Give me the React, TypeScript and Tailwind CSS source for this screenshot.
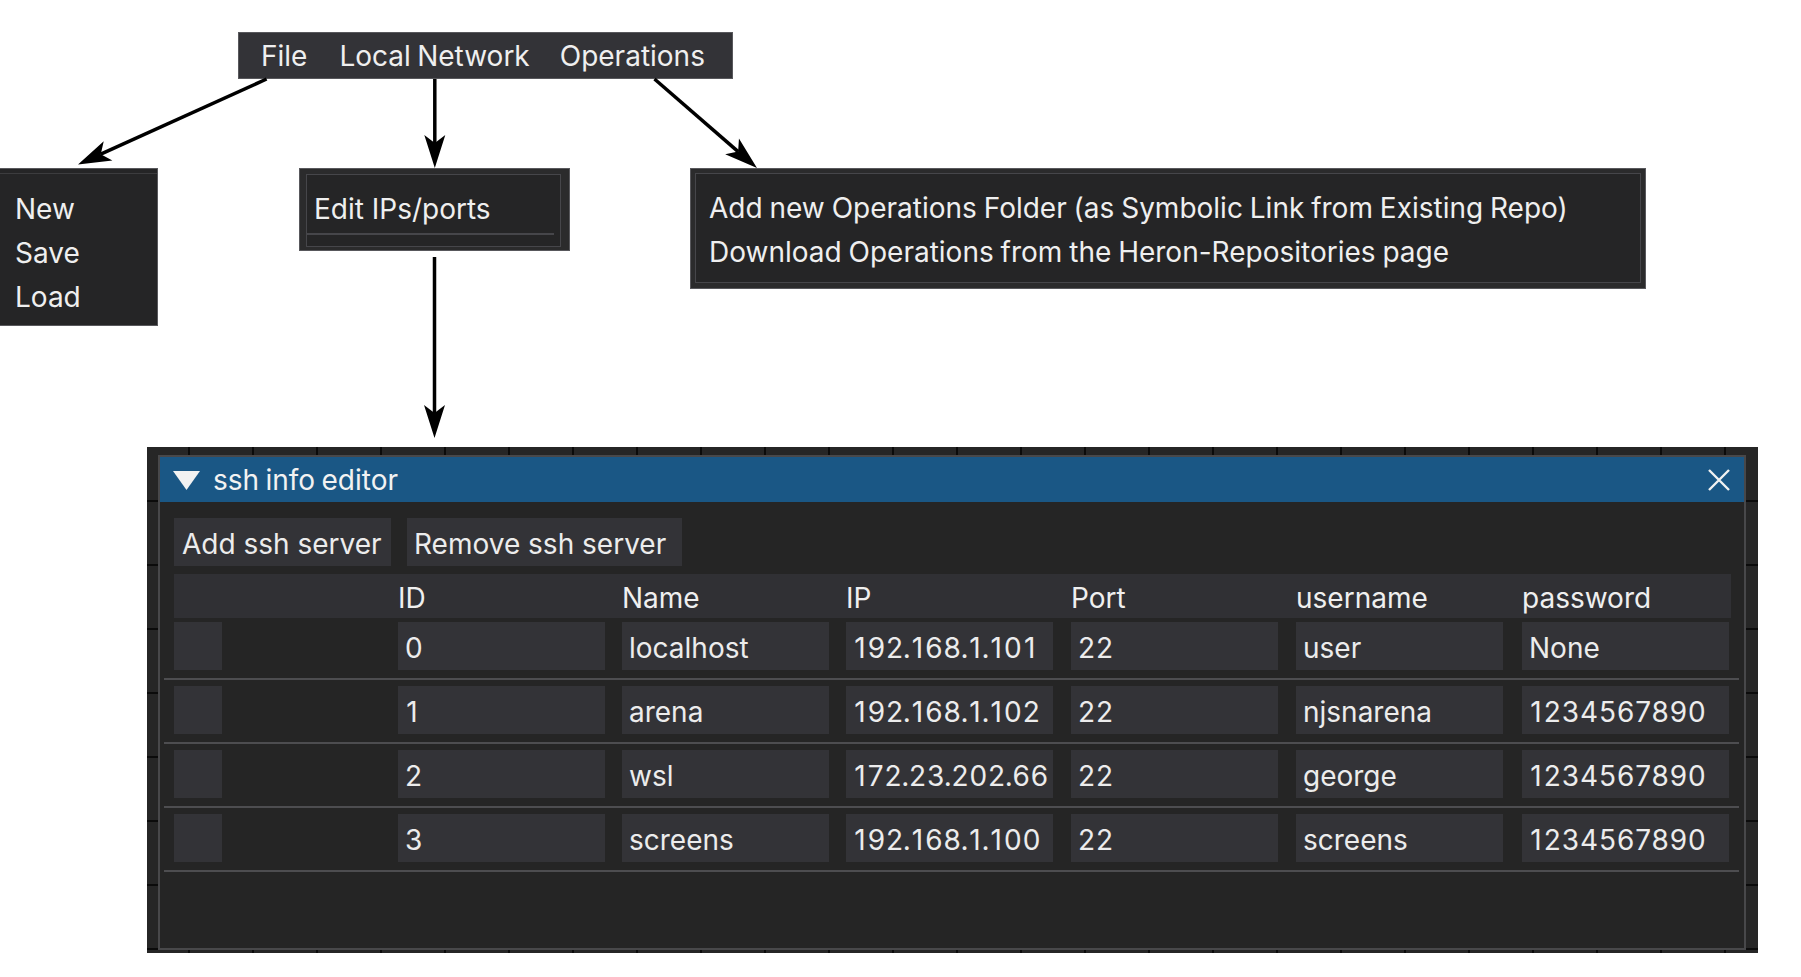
import React from 'react';

type Pt = { x1: number; y1: number; x2: number; y2: number };

const rows = [
  ['0', 'localhost', '192.168.1.101', '22', 'user', 'None'],
  ['1', 'arena', '192.168.1.102', '22', 'njsnarena', '1234567890'],
  ['2', 'wsl', '172.23.202.66', '22', 'george', '1234567890'],
  ['3', 'screens', '192.168.1.100', '22', 'screens', '1234567890'],
];

const headers = ['ID', 'Name', 'IP', 'Port', 'username', 'password'];

// line + notched arrow head, head length 33, half width 10.5
const Arrow = ({ x1, y1, x2, y2 }: Pt) => {
  const len = Math.hypot(x2 - x1, y2 - y1);
  const ux = (x2 - x1) / len;
  const uy = (y2 - y1) / len;
  const px = -uy;
  const py = ux;
  const L = 33;
  const W = 10.5;
  const notch = 8;
  const bx = x2 - ux * L;
  const by = y2 - uy * L;
  const nx = bx + ux * notch;
  const ny = by + uy * notch;
  const pts = [
    `${x2},${y2}`,
    `${bx + px * W},${by + py * W}`,
    `${nx},${ny}`,
    `${bx - px * W},${by - py * W}`,
  ].join(' ');
  return (
    <g>
      <line x1={x1} y1={y1} x2={nx} y2={ny} stroke="#000" strokeWidth={3.5} />
      <polygon points={pts} fill="#000" />
    </g>
  );
};

const MenuBar = () => (
  <div className="absolute left-[238px] top-[32px] w-[495px] h-[47px] bg-[#333337] border border-[#58585c] flex items-center pl-[22px] text-[#efefef] [word-spacing:-1.5px]">
    <span>File</span>
    <span className="ml-[32px]">Local Network</span>
    <span className="ml-[30px]">Operations</span>
  </div>
);

const FileMenu = () => (
  <div className="absolute left-0 top-[168px] w-[158px] h-[158px] bg-[#252526] border border-l-0 border-[#58585c] text-[#efefef]">
    <div className="border-t border-[#3c3c3e] mt-[4px] pl-[15px] pt-[13px] flex flex-col leading-[44px]">
      <span>New</span>
      <span>Save</span>
      <span>Load</span>
    </div>
  </div>
);

const EditMenu = () => (
  <div className="absolute left-[299px] top-[168px] w-[271px] h-[83px] bg-[#2b2b2c] border border-[#58585c] pl-[6px] pt-[5px] pr-[8px] pb-[3px] flex">
    <div className="flex-1 bg-[#252526] border border-[#46464a] flex flex-col text-[#efefef]">
      <div className="h-[58px] flex items-center pl-[7px] pt-[9px]">Edit IPs/ports</div>
      <div className="h-[2px] bg-[#46464a] mr-[6px]" />
    </div>
  </div>
);

const OperationsMenu = () => (
  <div className="absolute left-[690px] top-[168px] w-[956px] h-[121px] bg-[#2b2b2c] border border-[#58585c] p-[4px] pt-[4px] pb-[5px] flex">
    <div className="flex-1 bg-[#252526] border border-[#46464a] pl-[13px] pt-[12px] flex flex-col leading-[44px] text-[#efefef] [word-spacing:-1px]">
      <span>Add new Operations Folder (as Symbolic Link from Existing Repo)</span>
      <span>Download Operations from the Heron-Repositories page</span>
    </div>
  </div>
);

// the app font sets "1" wide and "." tight, so nudge those in number cells
const NumText = ({ text }: { text: string }) => (
  <span className="tracking-[0.9px]">
    {text.split('').map((ch, i) =>
      ch === '1' ? (
        <span key={i} className="px-[1.25px]">1</span>
      ) : ch === '.' ? (
        <span key={i} className="mx-[-1.3px]">.</span>
      ) : (
        <span key={i}>{ch}</span>
      ),
    )}
  </span>
);

const Cell = ({ text }: { text: string }) => (
  <div className="w-[207px] h-[48px] bg-[#333337] flex items-center pl-[7px] pt-[3px] text-[#ececec] whitespace-nowrap">
    {/^[\d.]+$/.test(text) ? <NumText text={text} /> : text}
  </div>
);

const SshEditor = () => (
  <div className="absolute left-[147px] top-[447px] w-[1611px] h-[506px] bg-[#262626] [background-image:linear-gradient(to_right,#0b0b0b_2px,transparent_2px),linear-gradient(to_bottom,#0b0b0b_2px,transparent_2px)] [background-size:64px_64px] [background-position:41px_53px] pl-[11px] pt-[8px] pr-[12px] pb-[3px] flex">
    <div className="flex-1 bg-[#252525] border-2 border-[#48484a] flex flex-col">
      <div className="h-[45px] bg-[#1a5785] flex items-center pl-[13px] pr-[14px] text-[#f2f2f2]">
        <svg width="27" height="19" viewBox="0 0 27 19" className="mt-[1px]">
          <polygon points="0,0 27,0 13.5,19" fill="#f2f2f2" />
        </svg>
        <span className="ml-[13px] flex-1 pt-[1px] [word-spacing:-1.5px]">ssh info editor</span>
        <svg width="22" height="22" viewBox="0 0 22 22" className="mt-[1px]">
          <path d="M1 1 L21 21 M21 1 L1 21" stroke="#f2f2f2" strokeWidth="2.4" />
        </svg>
      </div>
      <div className="pl-[14px] pt-[16px] flex flex-col">
        <div className="flex gap-[16px] h-[48px]">
          <div className="w-[217px] bg-[#333337] flex items-center pl-[8px] pt-[3px] text-[#ececec]">Add ssh server</div>
          <div className="w-[275px] bg-[#333337] flex items-center pl-[7px] pt-[3px] text-[#ececec]">Remove ssh server</div>
        </div>
        <div className="w-[1557px] mt-[8px]">
          <div className="h-[44px] pt-[3px] bg-[#303034] grid grid-cols-[224px_224px_224px_225px_225px_226px_209px] items-center text-[#efefef]">
            <span />
            {headers.map((h) => (
              <span key={h}>{h}</span>
            ))}
          </div>
          <div className="pt-[4px] flex flex-col">
            {rows.map((r) => (
              <div key={r[0]} className="flex flex-col">
                <div className="grid grid-cols-[224px_224px_224px_225px_225px_226px_209px]">
                  <div className="w-[48px] h-[48px] bg-[#333337]" />
                  {r.map((v, i) => (
                    <Cell key={i} text={v} />
                  ))}
                </div>
                <div className="h-[2px] bg-[#4d4d50] ml-[-10px] mr-[-8px] mt-[8px] mb-[6px]" />
              </div>
            ))}
          </div>
        </div>
      </div>
    </div>
  </div>
);

export default function App() {
  return (
    <div className="relative w-[1801px] h-[977px] bg-white overflow-hidden font-['Inter',sans-serif] text-[28px] leading-none">
      <MenuBar />
      <FileMenu />
      <EditMenu />
      <OperationsMenu />
      <SshEditor />
      <svg className="absolute left-0 top-0" width="1801" height="977">
        <Arrow x1={266.6} y1={79} x2={78} y2={164.5} />
        <Arrow x1={434.8} y1={79} x2={434.8} y2={168} />
        <Arrow x1={654.5} y1={79} x2={757} y2={168} />
        <Arrow x1={434.5} y1={257} x2={434.5} y2={438} />
      </svg>
    </div>
  );
}
